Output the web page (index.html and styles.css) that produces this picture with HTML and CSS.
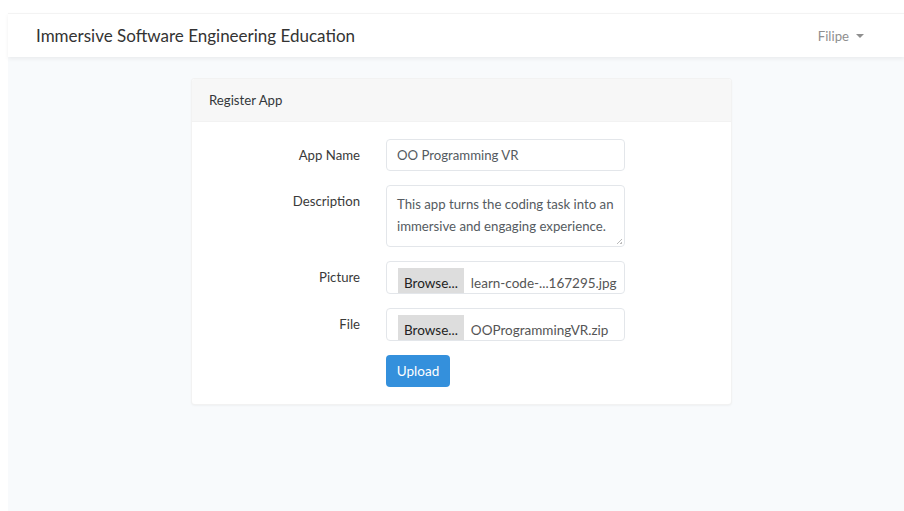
FILE: index.html
```html
<!DOCTYPE html>
<html lang="en">
<head>
<meta charset="utf-8">
<title>Register App</title>
<link rel="stylesheet" href="styles.css">
</head>
<body>
<div class="app">
  <nav class="navbar">
    <a class="brand" href="#">Immersive Software Engineering Education</a>
    <a class="user" href="#">Filipe <span class="caret"></span></a>
  </nav>
  <main class="main">
    <div class="card">
      <div class="card-header">Register App</div>
      <form class="card-body">
        <div class="row">
          <label class="label">App Name</label>
          <div class="field"><div class="control">OO Programming VR</div></div>
        </div>
        <div class="row">
          <label class="label">Description</label>
          <div class="field"><div class="control textarea">This app turns the coding task into an<br>immersive and engaging experience.<span class="grip"></span></div></div>
        </div>
        <div class="row">
          <label class="label">Picture</label>
          <div class="field"><div class="control file"><span class="browse">Browse...</span><span class="fname">learn-code-...167295.jpg</span></div></div>
        </div>
        <div class="row">
          <label class="label">File</label>
          <div class="field"><div class="control file"><span class="browse">Browse...</span><span class="fname">OOProgrammingVR.zip</span></div></div>
        </div>
        <div class="row">
          <span class="label"></span>
          <div class="field"><button type="button" class="btn">Upload</button></div>
        </div>
      </form>
    </div>
  </main>
</div>
</body>
</html>
```
FILE: styles.css
```css
* { box-sizing: border-box; }
html, body { margin: 0; }
body {
  background: #fff;
  padding: 13px 0 0 8px;
  font-family: Lato, "Noto Sans", sans-serif;
  font-size: 13.2px;
  color: #33373b;
}
.app {
  background: #f8fafc;
  height: 498px;
}
.navbar {
  height: 44px;
  background: #fff;
  border-top: 1px solid #f3f3f3;
  box-shadow: 0 2px 4px rgba(0,0,0,.06);
  display: flex;
  align-items: center;
  justify-content: space-between;
  padding: 0 40px 0 28px;
}
.brand {
  font-size: 17px;
  color: #333;
  text-decoration: none;
}
.user {
  color: #8f8f8f;
  text-decoration: none;
  font-size: 13.2px;
  display: flex;
  align-items: center;
}
.caret {
  display: inline-block;
  margin-left: 7px;
  border-top: 4px solid #8f8f8f;
  border-left: 4px solid transparent;
  border-right: 4px solid transparent;
}
.main {
  padding: 21px 0 0 183px;
}
.card {
  width: 541px;
  background: #fff;
  border: 1px solid rgba(0,0,0,.05);
  border-radius: 4px;
  overflow: hidden;
  box-shadow: 0 1px 2px rgba(0,0,0,.04);
}
.card-header {
  background: #f7f7f7;
  height: 43px;
  padding: 0 17px;
  display: flex;
  align-items: center;
  border-bottom: 1px solid #f2f2f2;
}
.card-body {
  padding: 17px 0 17px 0;
  display: flex;
  flex-direction: column;
  gap: 14px;
}
.row {
  display: flex;
  align-items: flex-start;
}
.label {
  width: 168px;
  text-align: right;
  padding-top: 8px;
  line-height: 16px;
  color: #3a3a3a;
}
.field {
  margin-left: 26px;
}
.control {
  width: 239px;
  height: 32px;
  border: 1px solid #e3e6ea;
  border-radius: 4px;
  padding: 0 10px;
  display: flex;
  align-items: center;
  color: #555b61;
  background: #fff;
  white-space: nowrap;
}
.control.textarea {
  height: 62px;
  display: block;
  padding: 7px 10px;
  line-height: 22px;
  position: relative;
}
.grip {
  position: absolute;
  right: 2px;
  bottom: 2px;
  width: 5px;
  height: 5px;
  background: linear-gradient(135deg, transparent 45%, #bbb 45%, #bbb 55%, transparent 55%, transparent 75%, #bbb 75%);
}
.control.file {
  height: 33px;
  padding: 6px 0 0 11px;
  align-items: flex-start;
  overflow: hidden;
}
.browse {
  background: #dddddd;
  color: #222;
  height: 30px;
  padding: 0 6px;
  display: flex;
  align-items: center;
  flex: none;
  font-size: 13.5px;
}
.fname {
  padding-left: 7px;
  height: 30px;
  display: flex;
  align-items: center;
  color: #555;
  font-size: 13.5px;
}
.btn {
  height: 32px;
  width: 64px;
  border: 0;
  border-radius: 4px;
  background: #3490dc;
  color: #fff;
  font: inherit;
  font-size: 13.5px;
  padding: 0;
}
```
